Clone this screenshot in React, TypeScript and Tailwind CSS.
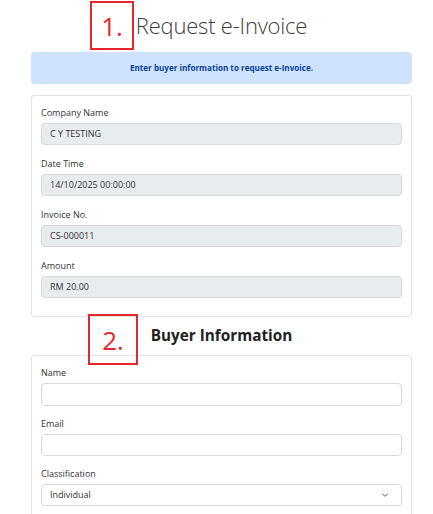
import React from 'react';

// Readonly invoice fields shown at the top
const invoiceFields = [
  { label: 'Company Name', value: 'C Y TESTING' },
  { label: 'Date Time', value: '14/10/2025 00:00:00' },
  { label: 'Invoice No.', value: 'CS-000011' },
  { label: 'Amount', value: 'RM 20.00' },
];

const StepMark = ({ n, className }: { n: string; className: string }) => (
  <span
    className={`absolute flex items-center justify-center border-[2.5px] border-[#e5262c] text-[#e5262c] text-[26px] leading-none font-normal ${className}`}
  >
    {n}
  </span>
);

const Field = ({ label, children }: { label: string; children: React.ReactNode }) => (
  <div className="flex flex-col">
    <label className="text-[9px] leading-[13px] text-[#333] mb-[4px]">{label}</label>
    {children}
  </div>
);

const App: React.FC = () => {
  return (
    <div className="w-[433px] h-[514px] overflow-hidden bg-white font-['Open_Sans',sans-serif] text-[#212529]">
      <div className="ml-[31px] w-[381px]">
        {/* Title */}
        <div className="relative h-[52px] flex items-center justify-center">
          <h1 className="text-[22px] font-light text-[#3c3c3c] tracking-[-0.2px] pb-[2px]">Request e-Invoice</h1>
          <StepMark n="1." className="left-[59px] top-[1px] w-[44px] h-[49px]" />
        </div>

        <div className="h-[32px] rounded-[4px] bg-[#cfe2ff] flex items-center justify-center text-[8.1px] font-bold text-[#084298]">
          Enter buyer information to request e-Invoice.
        </div>

        {/* Invoice details */}
        <div className="mt-[11px] border border-[#e2e3e5] rounded-[3px] px-[9px] pt-[10px] pb-[18px] flex flex-col gap-[12px]">
          {invoiceFields.map((f) => (
            <Field key={f.label} label={f.label}>
              <div className="h-[22px] rounded-[4px] border border-[#d6d8db] bg-[#e9ecef] px-[8px] flex items-center text-[9px] text-[#333]">
                {f.value}
              </div>
            </Field>
          ))}
        </div>

        {/* Buyer section heading */}
        <div className="relative h-[38px] flex items-center justify-center">
          <h2 className="text-[15.3px] font-bold text-[#222] pb-[2px]">Buyer Information</h2>
          <StepMark n="2." className="left-[57px] top-[-3px] w-[50px] h-[51px]" />
        </div>

        <div className="border border-[#e2e3e5] rounded-[3px] px-[9px] pt-[10px] pb-[18px] flex flex-col gap-[11px]">
          <Field label="Name">
            <input className="h-[23px] rounded-[4px] border border-[#d6d8db] bg-white px-[8px] text-[9px] outline-none" />
          </Field>
          <Field label="Email">
            <input className="h-[22px] rounded-[4px] border border-[#d6d8db] bg-white px-[8px] text-[9px] outline-none" />
          </Field>
          <Field label="Classification">
            <div className="h-[22px] rounded-[4px] border border-[#d6d8db] bg-white px-[8px] flex items-center justify-between text-[9px] text-[#333]">
              <span>Individual</span>
              <svg className="w-[8px] h-[8px] mr-[4px] text-[#555]" viewBox="0 0 16 16" fill="none" stroke="currentColor" strokeWidth="1.8">
                <path d="M3 6l5 4.5L13 6" strokeLinecap="round" strokeLinejoin="round" />
              </svg>
            </div>
          </Field>
        </div>
      </div>
    </div>
  );
};

export default App;
